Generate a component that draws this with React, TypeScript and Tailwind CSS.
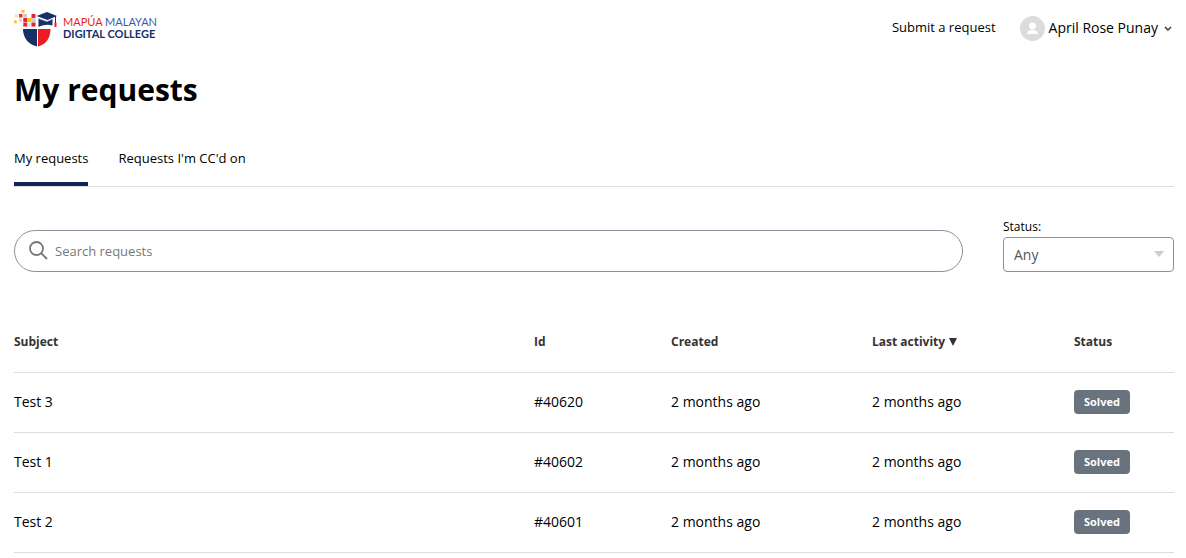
import React, { useState } from 'react';

interface RequestItem {
  id: string;
  subject: string;
  created: string;
  lastActivity: string;
  status: string;
}

const REQUESTS: RequestItem[] = [
  { id: '#40620', subject: 'Test 3', created: '2 months ago', lastActivity: '2 months ago', status: 'Solved' },
  { id: '#40602', subject: 'Test 1', created: '2 months ago', lastActivity: '2 months ago', status: 'Solved' },
  { id: '#40601', subject: 'Test 2', created: '2 months ago', lastActivity: '2 months ago', status: 'Solved' },
];

const LogoMark: React.FC = () => (
  <svg width="43" height="38" viewBox="0 0 43 38" aria-hidden="true">
    {/* Scattered squares */}
    <rect x="7.500" y="1" width="3" height="2.800" fill="#fbc02d" />
    <rect x="1" y="5.500" width="3" height="3" fill="#f9dcae" />
    <rect x="5" y="5" width="3.500" height="3.500" fill="#e8323a" />
    <rect x="9.300" y="5" width="3.700" height="3.700" fill="#c3c9dc" />
    <rect x="17.500" y="5" width="4" height="4" fill="#e8222a" />
    <rect x="5" y="9.500" width="3" height="3" fill="#f9c8a0" />
    <rect x="9.300" y="9" width="4" height="4" fill="#e8222a" />
    <rect x="13.500" y="9" width="4" height="4" fill="#fbbf14" />
    <rect x="17.500" y="9.300" width="4" height="3.700" fill="#c3c9dc" />
    <rect x="0" y="11.500" width="2.800" height="2.800" fill="#fbc02d" />
    <rect x="9.300" y="13.500" width="4" height="4" fill="#e8222a" />
    <rect x="13.500" y="13.500" width="4" height="4" fill="#dfe2ec" />
    <rect x="17.500" y="13.500" width="4" height="4" fill="#e8222a" />
    {/* Shield */}
    <path d="M9 20h14v17.500C14.500 35.500 9 29 9 20z" fill="#16306a" />
    <path d="M24 20h12.500c0 9-4.500 15.500-12.500 17.500z" fill="#ea1d25" />
    {/* Graduation cap */}
    <path d="M22.500 7 33 3l10 4-9.500 4z" fill="#16306a" />
    <path d="M24.500 9.500 33 12.500l5.500-2.500v6.500c-5-1.500-9-.5-14 1.500z" fill="#16306a" />
    <path d="M24.500 9.500 33 12.500 39 10" fill="none" stroke="#aab3cb" strokeWidth=".8" />
    <path d="M41.500 7v7" stroke="#16306a" strokeWidth="1" />
    <path d="M40.500 13.500h2v4.500h-2z" fill="#ea1d25" />
  </svg>
);

const Header: React.FC = () => (
  <header className="flex items-center justify-between pt-2">
    <a href="#home" className="flex h-10 items-center gap-1.5 font-['Lato',sans-serif]">
      <LogoMark />
      <span className="flex flex-col">
        <span className="text-[11px] leading-3 whitespace-nowrap text-[#3b5ba5]">
          <span className="text-[#ea1d25]">MAPÚA</span> MALAYAN
        </span>
        <span className="text-[11px] leading-3 font-bold whitespace-nowrap text-[#16306a]">DIGITAL COLLEGE</span>
      </span>
    </a>
    <nav className="flex items-center gap-6">
      <a href="#new" className="text-[13px]">
        Submit a request
      </a>
      <button type="button" className="flex items-center gap-1 text-sm" aria-haspopup="menu">
        <svg width="25" height="25" viewBox="0 0 25 25" aria-hidden="true">
          <circle cx="12.500" cy="12.500" r="12.500" fill="#dcdcdc" />
          <circle cx="12.500" cy="10" r="3.400" fill="#fff" />
          <path d="M7 18c0-3 2.300-4 5.500-4s5.500 1 5.500 4z" fill="#fff" />
        </svg>
        April Rose Punay
        <svg width="12" height="12" viewBox="0 0 12 12" fill="none" stroke="#333" strokeWidth="1.400" aria-hidden="true">
          <path d="M3 5l3 3 3-3" />
        </svg>
      </button>
    </nav>
  </header>
);

export default function App() {
  const [query, setQuery] = useState('');
  const [status, setStatus] = useState('any');

  return (
    <div className="bg-white pr-3 pl-3.5 font-['Open_Sans',sans-serif] text-black">
      <Header />

      <main>
        <h1 className="mt-5 text-3xl leading-11 font-bold">My requests</h1>

        <nav className="mt-8 flex gap-[30px] border-b border-[#ddd] text-[13px]">
          <a href="#requests" aria-current="page" className="border-b-4 border-[#16225a] pt-1 pb-3.5 leading-5">
            My requests
          </a>
          <a href="#ccd" className="pt-1 pb-3.5 leading-5">
            Requests I'm CC'd on
          </a>
        </nav>

        {/* Filters */}
        <div className="mt-[30px] flex items-end gap-10">
          <div className="relative flex-1">
            <svg
              className="absolute top-2.5 left-3.5"
              width="20"
              height="20"
              viewBox="0 0 20 20"
              fill="none"
              stroke="#777"
              strokeWidth="1.800"
              aria-hidden="true"
            >
              <circle cx="8.500" cy="8.500" r="6.500" />
              <path d="M13 13l6 6" />
            </svg>
            <input
              type="search"
              value={query}
              onChange={(e) => setQuery(e.target.value)}
              placeholder="Search requests"
              aria-label="Search requests"
              className="h-[42px] w-full rounded-full border border-[#87929d] pr-5 pl-10 text-[13px] placeholder:text-[#777]"
            />
          </div>
          <div className="w-[171px]">
            <label htmlFor="request-status" className="block text-xs leading-5">
              Status:
            </label>
            <div className="relative">
              <select
                id="request-status"
                value={status}
                onChange={(e) => setStatus(e.target.value)}
                className="block h-[35px] w-full appearance-none rounded border border-[#87929d] bg-white px-2.5 text-sm text-[#555]"
              >
                <option value="any">Any</option>
                <option value="open">Open</option>
                <option value="solved">Solved</option>
              </select>
              <svg
                className="pointer-events-none absolute top-3.5 right-2.5"
                width="10"
                height="6"
                viewBox="0 0 10 6"
                aria-hidden="true"
              >
                <path d="M0 0h10L5 6z" fill="#ccc" />
              </svg>
            </div>
          </div>
        </div>

        <table className="mt-10 w-full table-fixed text-left text-sm">
          <thead>
            <tr className="h-[60px] border-b border-[#ddd] text-xs text-[#333]">
              <th className="font-bold">Subject</th>
              <th className="w-[137px] font-bold">Id</th>
              <th className="w-[201px] font-bold">Created</th>
              <th className="w-[202px] font-bold" aria-sort="descending">
                <button type="button" className="flex items-center gap-1 font-bold">
                  Last activity
                  <svg width="8" height="8" viewBox="0 0 8 8" aria-hidden="true">
                    <path d="M0 0h8L4 8z" fill="#333" />
                  </svg>
                </button>
              </th>
              <th className="w-[100px] font-bold">Status</th>
            </tr>
          </thead>
          <tbody>
            {REQUESTS.map((item) => (
              <tr key={item.id} className="h-[60px] border-b border-[#ddd]">
                <td>
                  <a href={`#${item.subject}`}>{item.subject}</a>
                </td>
                <td>{item.id}</td>
                <td>{item.created}</td>
                <td>{item.lastActivity}</td>
                <td>
                  <span className="inline-block rounded bg-[#68737d] px-2.5 text-[11px] leading-6 font-bold text-white">
                    {item.status}
                  </span>
                </td>
              </tr>
            ))}
          </tbody>
        </table>
      </main>
    </div>
  );
}
